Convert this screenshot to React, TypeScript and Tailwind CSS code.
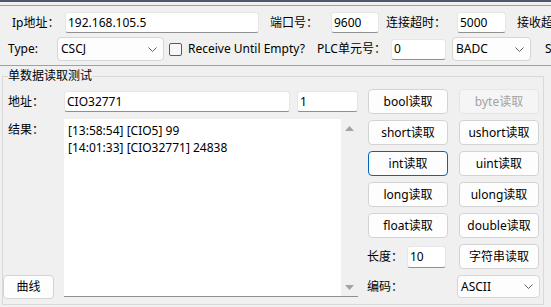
import React from "react";

const Chevron = () => (
  <svg width="9" height="5" viewBox="0 0 9 5" className="shrink-0">
    <path d="M0.5 0.5 L4.5 4.5 L8.5 0.5" fill="none" stroke="#5f5f5f" strokeWidth="1" />
  </svg>
);

function Field({ value, className }: { value: string; className: string }) {
  return (
    <div
      className={
        "shrink-0 bg-white border border-[#e6e6e6] border-b-[#8f8f8f] rounded-[3px] flex items-center pl-[2px] whitespace-nowrap overflow-hidden " +
        className
      }
    >
      {value}
    </div>
  );
}

function Select({ value, className }: { value: string; className: string }) {
  return (
    <div
      className={
        "shrink-0 bg-[#fdfdfd] border border-[#d5d5d5] rounded-[4px] flex items-center justify-between pl-[3px] pr-[6px] " +
        className
      }
    >
      <span>{value}</span>
      <Chevron />
    </div>
  );
}

function Btn({ label, variant }: { label: string; variant?: "focus" | "disabled" }) {
  if (variant === "disabled")
    return (
      <div className="h-[25px] w-[80px] flex items-center justify-center rounded-[4px] border border-[#e6e6e6] bg-[#f5f5f5] text-[#a3a3a3]">
        {label}
      </div>
    );
  if (variant === "focus")
    return (
      <div className="h-[25px] w-[80px] flex items-center justify-center rounded-[4px] border border-[#0067c0] bg-[#fdfdfd]">
        {label}
      </div>
    );
  return (
    <div className="h-[25px] w-[80px] flex items-center justify-center rounded-[4px] border border-[#d3d3d3] bg-[#fdfdfd]">
      {label}
    </div>
  );
}

export default function App() {
  return (
    <div className="w-[551px] h-[307px] overflow-hidden bg-[#f0f0f0] text-[12px] leading-[16px] text-black font-['Noto_Sans','Noto_Sans_CJK_SC',sans-serif]">
      <div className="h-[2px] bg-[#4e5769]" />
      <div className="h-[3px]" />
      {/* top panel */}
      <div className="h-[61px] border-t border-b border-[#a0a0a0] pt-[6px] w-[551px]">
        <div className="flex items-center h-[21px] pl-[12px] whitespace-nowrap">
          <div className="w-[53px] shrink-0">Ip地址：</div>
          <Field value="192.168.105.5" className="w-[194px] h-[21px]" />
          <div className="ml-[11px] w-[61px] shrink-0">端口号：</div>
          <Field value="9600" className="w-[48px] h-[21px]" />
          <div className="ml-[7px] w-[71px] shrink-0">连接超时：</div>
          <Field value="5000" className="w-[49px] h-[21px]" />
          <div className="ml-[11px] shrink-0">接收超时：</div>
        </div>
        <div className="flex items-center h-[24px] mt-[4px] pl-[8px] whitespace-nowrap">
          <div className="w-[49px] shrink-0">Type:</div>
          <Select value="CSCJ" className="w-[107px] h-[24px]" />
          <div className="ml-[5px] w-[13px] h-[13px] shrink-0 rounded-[2px] border border-[#5a5a5a] bg-[#f7f7f7]" />
          <div className="ml-[6px] w-[129px] shrink-0">Receive Until Empty?</div>
          <div className="w-[74px] shrink-0">PLC单元号：</div>
          <Field value="0" className="w-[55px] h-[21px]" />
          <Select value="BADC" className="ml-[6px] w-[79px] h-[24px]" />
          <div className="ml-[14px] shrink-0">Station</div>
        </div>
      </div>

      {/* group box */}
      <fieldset className="mt-[2px] ml-[2px] w-[542px] border border-[#d9d9d9] pb-[5px]">
        <legend className="ml-[5px] px-0 leading-[16px]">单数据读取测试</legend>
        <div className="flex pt-[5px]">
          {/* left part */}
          <div className="flex flex-col w-[355px] shrink-0">
            <div className="flex items-center h-[25px]">
              <div className="w-[61px] pl-[5px] shrink-0">地址：</div>
              <Field value="CIO32771" className="w-[226px] h-[21px]" />
              <Field value="1" className="ml-[7px] w-[61px] h-[21px]" />
            </div>
            <div className="flex items-start mt-[5px]">
              <div className="w-[61px] h-[180px] shrink-0 flex flex-col justify-between">
                <div className="pl-[5px] pt-[3px]">结果：</div>
                <div className="w-[51px] h-[24px] flex items-center justify-center rounded-[4px] border border-[#d3d3d3] bg-[#fdfdfd]">
                  曲线
                </div>
              </div>
              <div className="w-[294px] h-[178px] bg-white border-b border-[#8f8f8f] flex">
                <div className="flex-1 pl-[4px] pt-[3px] leading-[17px]">
                  <div>[13:58:54] [CIO5] 99</div>
                  <div>[14:01:33] [CIO32771] 24838</div>
                </div>
                <div className="w-[17px] bg-[#f0f0f0] flex flex-col items-center justify-between pt-[7px] pb-[6px]">
                  <svg width="9" height="5" viewBox="0 0 9 5">
                    <path d="M0 5 L4.5 0 L9 5 Z" fill="#a3a3a3" />
                  </svg>
                  <svg width="9" height="5" viewBox="0 0 9 5">
                    <path d="M0 0 L4.5 5 L9 0 Z" fill="#a3a3a3" />
                  </svg>
                </div>
              </div>
            </div>
          </div>
          {/* right part */}
          <div className="ml-[10px] flex flex-col">
            <div className="grid grid-cols-[80px_80px] gap-x-[11px] gap-y-[6px]">
              <Btn label="bool读取" />
              <Btn label="byte读取" variant="disabled" />
              <Btn label="short读取" />
              <Btn label="ushort读取" />
              <Btn label="int读取" variant="focus" />
              <Btn label="uint读取" />
              <Btn label="long读取" />
              <Btn label="ulong读取" />
              <Btn label="float读取" />
              <Btn label="double读取" />
              <div className="flex items-center h-[25px]">
                <div className="w-[40px] shrink-0 -ml-[1px]">长度：</div>
                <Field value="10" className="w-[39px] h-[22px]" />
              </div>
              <Btn label="字符串读取" />
            </div>
            <div className="flex items-center justify-between mt-[6px] w-[172px] h-[23px]">
              <div className="-ml-[1px]">编码：</div>
              <Select value="ASCII" className="w-[83px] h-[23px]" />
            </div>
          </div>
        </div>
      </fieldset>
    </div>
  );
}
